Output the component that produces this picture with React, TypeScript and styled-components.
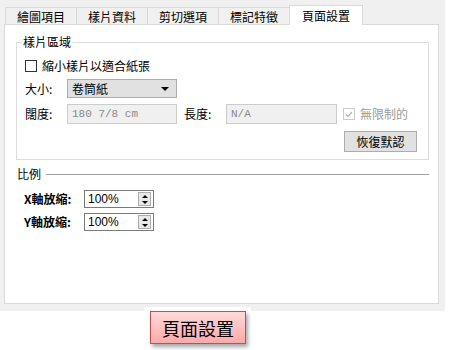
import * as React from 'react';
import styled, { createGlobalStyle } from 'styled-components';

const GlobalStyle = createGlobalStyle`
  body {
    margin: 0;
    background: #ffffff;
    font-family: "Noto Sans CJK TC", "Noto Sans", sans-serif;
    font-size: 12px;
    color: #000;
  }
`;

const Window = styled.div`
  width: 445px;
  height: 311px;
  box-sizing: border-box;
  background: #f0f0f0;
  padding: 5px 0 7px 4px;
  display: flex;
  flex-direction: column;
`;

const TabStrip = styled.div`
  display: flex;
  align-items: flex-end;
  height: 19px;
  padding-left: 1px;
`;

const Tab = styled.div<{ $active?: boolean }>`
  box-sizing: border-box;
  height: ${p => (p.$active ? '20px' : '17px')};
  margin-bottom: ${p => (p.$active ? '-1px' : '0')};
  padding: 0 ${p => (p.$active ? '12px' : '11px')};
  margin-left: -1px;
  border: 1px solid #d9d9d9;
  border-bottom: none;
  background: ${p => (p.$active ? '#ffffff' : '#f0f0f0')};
  position: relative;
  z-index: ${p => (p.$active ? 1 : 0)};
  display: flex;
  align-items: center;
  justify-content: center;
  line-height: 14px;
  padding-top: ${p => (p.$active ? '0' : '1px')};
  &:first-child { margin-left: 0; }
`;

const Page = styled.div`
  width: 435px;
  flex: 1;
  box-sizing: border-box;
  background: #ffffff;
  border: 1px solid #d9d9d9;
  padding: 9px 9px 0 11px;
  display: flex;
  flex-direction: column;
`;

const Group = styled.fieldset`
  margin: 0;
  border: 1px solid #dcdcdc;
  padding: 8px 11px 7px 8px;
  display: flex;
  flex-direction: column;
  min-width: 0;
`;

const Legend = styled.legend`
  margin-left: -4px;
  padding: 0 2px;
  line-height: 16px;
  font-size: 12px;
`;

const Row = styled.div<{ $top?: number; $end?: boolean }>`
  display: flex;
  align-items: center;
  margin-top: ${p => p.$top ?? 0}px;
  justify-content: ${p => (p.$end ? 'flex-end' : 'flex-start')};
`;

const Check = styled.span<{ $disabled?: boolean }>`
  width: 12px;
  height: 12px;
  box-sizing: border-box;
  border: 1px solid ${p => (p.$disabled ? '#cccccc' : '#333333')};
  background: #ffffff;
  display: inline-flex;
  align-items: center;
  justify-content: center;
  flex: none;
`;

const CheckLabel = styled.label<{ $disabled?: boolean }>`
  display: flex;
  align-items: center;
  gap: 5px;
  line-height: 16px;
  color: ${p => (p.$disabled ? '#9a9a9a' : '#000')};
`;

const FieldLabel = styled.span<{ $width: number }>`
  width: ${p => p.$width}px;
  flex: none;
  line-height: 16px;
`;

const Select = styled.div`
  width: 110px;
  height: 19px;
  box-sizing: border-box;
  border: 1px solid #adadad;
  background: #e1e1e1;
  display: flex;
  align-items: center;
  justify-content: space-between;
  padding: 0 7px 0 4px;
  line-height: 16px;
`;

const Arrow = styled.span`
  width: 0;
  height: 0;
  border-left: 4px solid transparent;
  border-right: 4px solid transparent;
  border-top: 4px solid #000;
`;

const TextBox = styled.div<{ $width: number }>`
  width: ${p => p.$width}px;
  height: 20px;
  box-sizing: border-box;
  border: 1px solid #cccccc;
  background: #f0f0f0;
  color: #8a8a8a;
  font-family: "Liberation Mono", monospace;
  font-size: 11px;
  display: flex;
  align-items: center;
  padding-left: 4px;
`;

const Button = styled.button`
  width: 73px;
  height: 21px;
  box-sizing: border-box;
  border: 1px solid #adadad;
  background: #e1e1e1;
  font-family: inherit;
  font-size: 12px;
  line-height: 16px;
  padding: 0;
  color: #000;
`;

const Section = styled.div`
  display: flex;
  flex-direction: column;
  margin-top: 6px;
`;

const SectionHead = styled.div`
  display: flex;
  align-items: center;
  gap: 5px;
  padding-left: 1px;
  line-height: 16px;
`;

const Rule = styled.div`
  flex: 1;
  height: 1px;
  background: #a0a0a0;
`;

const ScaleRow = styled.div<{ $top: number }>`
  display: flex;
  align-items: center;
  margin-top: ${p => p.$top}px;
  padding-left: 8px;
`;

const ScaleLabel = styled.span`
  width: 60px;
  line-height: 16px;
  font-weight: 600;
`;

const Spinner = styled.div`
  width: 70px;
  height: 18px;
  box-sizing: border-box;
  border: 1px solid #7a7a7a;
  display: flex;
  align-items: center;
  justify-content: space-between;
  padding: 1px 2px 1px 3px;
  font-family: "Liberation Sans", sans-serif;
  font-size: 12px;
`;

const SpinButtons = styled.div`
  width: 13px;
  height: 14px;
  box-sizing: border-box;
  border: 1px solid #adadad;
  background: #e8e8e8;
  display: flex;
  flex-direction: column;
  align-items: center;
  justify-content: space-around;
`;

const SpinArrow = styled.span<{ $down?: boolean }>`
  width: 0;
  height: 0;
  border-left: 3px solid transparent;
  border-right: 3px solid transparent;
  ${p => (p.$down ? 'border-top: 3px solid #000;' : 'border-bottom: 3px solid #000;')}
`;

const ActionDock = styled.div`
  margin: -4px 0 0 144px;
  width: 107px;
  box-sizing: border-box;
  background: #ffffff;
  padding: 4px 5px 8px 6px;
`;

const PinkButton = styled.button`
  width: 96px;
  height: 33px;
  box-sizing: border-box;
  border: 1px solid #c0504d;
  background: linear-gradient(#ffdada, #ffa9a9);
  box-shadow: 2px 3px 4px rgba(0, 0, 0, 0.35);
  font-family: "Noto Sans CJK TC", sans-serif;
  font-size: 18px;
  line-height: 22px;
  padding: 0;
  color: #000;
`;

const tabs = ['繪圖項目', '樣片資料', '剪切選項', '標記特徵', '頁面設置'];

const App: React.FC = () => {
  return (
    <>
      <GlobalStyle />
      <Window>
        <TabStrip>
          {tabs.map((t, i) => (
            <Tab key={t} $active={i === 4}>{t}</Tab>
          ))}
        </TabStrip>
        <Page>
          <Group>
            <Legend>樣片區域</Legend>
            <Row>
              <CheckLabel>
                <Check />
                縮小樣片以適合紙張
              </CheckLabel>
            </Row>
            <Row $top={5}>
              <FieldLabel $width={42}>大小:</FieldLabel>
              <Select>
                <span>卷筒紙</span>
                <Arrow />
              </Select>
            </Row>
            <Row $top={6}>
              <FieldLabel $width={42}>闊度:</FieldLabel>
              <TextBox $width={110}>180 7/8 cm</TextBox>
              <FieldLabel $width={42} style={{ marginLeft: 7 }}>長度:</FieldLabel>
              <TextBox $width={111}>N/A</TextBox>
              <CheckLabel $disabled style={{ marginLeft: 6 }}>
                <Check $disabled>
                  <svg width="8" height="7" viewBox="0 0 8 7">
                    <path d="M1 3.5 L3 5.5 L7 1" fill="none" stroke="#b0b0b0" strokeWidth="1.2" />
                  </svg>
                </Check>
                無限制的
              </CheckLabel>
            </Row>
            <Row $top={7} $end>
              <Button>恢復默認</Button>
            </Row>
          </Group>
          <Section>
            <SectionHead>
              <span>比例</span>
              <Rule />
            </SectionHead>
            <ScaleRow $top={8}>
              <ScaleLabel>X軸放縮:</ScaleLabel>
              <Spinner>
                <span>100%</span>
                <SpinButtons>
                  <SpinArrow />
                  <SpinArrow $down />
                </SpinButtons>
              </Spinner>
            </ScaleRow>
            <ScaleRow $top={5}>
              <ScaleLabel>Y軸放縮:</ScaleLabel>
              <Spinner>
                <span>100%</span>
                <SpinButtons>
                  <SpinArrow />
                  <SpinArrow $down />
                </SpinButtons>
              </Spinner>
            </ScaleRow>
          </Section>
        </Page>
      </Window>
      <ActionDock>
        <PinkButton>頁面設置</PinkButton>
      </ActionDock>
    </>
  );
};

export default App;
